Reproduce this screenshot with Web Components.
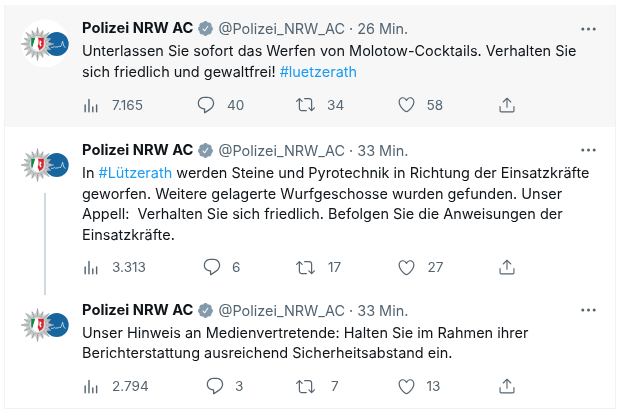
<!DOCTYPE html>
<html lang="de">
<head>
<meta charset="utf-8">
<title>Polizei NRW AC</title>
<style>
  html, body { margin: 0; background: #fff; }
  body { font-family: Inter, "Liberation Sans", sans-serif; color: #0f1419; }
</style>
</head>
<body>
<tweet-thread>
  <tweet-item active pad="13" av="1" gap="12.7" bottom="12.6" cols="114px 100px 100.5px 101px 1fr" ics="30,31,31,30,18" stats="7.165,40,34,58" time="26 Min.">
    Unterlassen Sie sofort das Werfen von Molotow-Cocktails. Verhalten Sie<br>sich friedlich und gewaltfrei! <a-link>#luetzerath</a-link>
  </tweet-item>
  <tweet-item thread pad="12.5" av="0" gap="12" bottom="12" cols="120px 94px 100.5px 101px 1fr" ics="30,30,32,31,18" stats="3.313,6,17,27" time="33 Min.">
    In <a-link>#Lützerath</a-link> werden Steine und Pyrotechnik in Richtung der Einsatzkräfte<br>geworfen. Weitere gelagerte Wurfgeschosse wurden gefunden. Unser<br>Appell:&nbsp; Verhalten Sie sich friedlich. Befolgen Sie die Anweisungen der<br>Einsatzkräfte.
  </tweet-item>
  <tweet-item pad="10.5" av="0" gap="12" bottom="12" cols="123px 91px 100.5px 101px 1fr" ics="30,30,35,30,18" stats="2.794,3,7,13" time="33 Min.">
    Unser Hinweis an Medienvertretende: Halten Sie im Rahmen ihrer<br>Berichterstattung ausreichend Sicherheitsabstand ein.
  </tweet-item>
</tweet-thread>
<script>
const ICONS = {
  views: '<path d="M4.2 21v-9M9.3 21V4.5M14.4 21v-6.5M19.5 21v-9" fill="none" stroke="currentColor" stroke-width="1.9" stroke-linecap="round"/>',
  reply: '<path d="M14.046 2.242l-4.148-.01h-.002c-4.374 0-7.8 3.427-7.8 7.802 0 4.098 3.186 7.206 7.465 7.37v3.828c0 .108.044.286.12.403.142.225.384.347.632.347.138 0 .277-.038.402-.118.264-.168 6.473-4.14 8.088-5.506 1.902-1.61 3.04-3.97 3.043-6.312v-.017c-.006-4.367-3.43-7.787-7.8-7.788zm3.787 12.972c-1.134.96-4.862 3.405-6.772 4.643V16.67c0-.414-.335-.75-.75-.75h-.396c-3.66 0-6.318-2.476-6.318-5.886 0-3.534 2.768-6.302 6.3-6.302l4.147.01h.002c3.532 0 6.3 2.766 6.302 6.296-.003 1.91-.942 3.844-2.514 5.176z"/>',
  retweet: '<path d="M23.77 15.67c-.292-.293-.767-.293-1.06 0l-2.22 2.22V7.65c0-2.068-1.683-3.75-3.75-3.75h-5.85c-.414 0-.75.336-.75.75s.336.75.75.75h5.85c1.24 0 2.25 1.01 2.25 2.25v10.24l-2.22-2.22c-.293-.293-.768-.293-1.06 0s-.294.768 0 1.06l3.5 3.5c.145.147.337.22.53.22s.383-.072.53-.22l3.5-3.5c.294-.292.294-.767 0-1.06zm-10.66 3.28H7.26c-1.24 0-2.25-1.01-2.25-2.25V6.46l2.22 2.22c.148.147.34.22.532.22s.384-.073.53-.22c.293-.293.293-.768 0-1.06l-3.5-3.5c-.293-.294-.768-.294-1.06 0l-3.5 3.5c-.294.292-.294.767 0 1.06s.767.293 1.06 0l2.22-2.22V16.7c0 2.068 1.683 3.75 3.75 3.75h5.85c.414 0 .75-.336.75-.75s-.337-.75-.75-.75z"/>',
  like: '<path d="M12 21.638h-.014C9.403 21.59 1.95 14.856 1.95 8.478c0-3.064 2.525-5.754 5.403-5.754 2.29 0 3.83 1.58 4.646 2.73.814-1.148 2.354-2.73 4.645-2.73 2.88 0 5.404 2.69 5.404 5.755 0 6.376-7.454 13.11-10.037 13.157H12zM7.354 4.225c-2.08 0-3.903 1.988-3.903 4.255 0 5.74 7.034 11.596 8.55 11.658 1.518-.062 8.55-5.917 8.55-11.658 0-2.267-1.823-4.255-3.903-4.255-2.528 0-3.94 2.936-3.952 2.965-.23.562-1.156.562-1.387 0-.014-.03-1.425-2.965-3.954-2.965z"/>',
  share: '<path d="M17.53 7.47l-5-5c-.293-.293-.768-.293-1.06 0l-5 5c-.294.293-.294.768 0 1.06s.767.294 1.06 0l3.72-3.72V15c0 .414.336.75.75.75s.75-.336.75-.75V4.81l3.72 3.72c.146.147.338.22.53.22s.384-.072.53-.22c.293-.293.293-.767 0-1.06z"/><path d="M19.708 21.944H4.292C3.028 21.944 2 20.916 2 19.652V14c0-.414.336-.75.75-.75s.75.336.75.75v5.652c0 .437.355.792.792.792h15.416c.437 0 .792-.355.792-.792V14c0-.414.336-.75.75-.75s.75.336.75.75v5.652c0 1.264-1.028 2.292-2.292 2.292z"/>'
};

class ALink extends HTMLElement {
  constructor() {
    super();
    this.attachShadow({ mode: 'open' }).innerHTML =
      '<style>:host{display:inline;color:#1d9bf0}</style><slot></slot>';
  }
}
customElements.define('a-link', ALink);

class TweetThread extends HTMLElement {
  constructor() {
    super();
    this.attachShadow({ mode: 'open' }).innerHTML = `<style>
      :host{display:block;box-sizing:border-box;width:612px;margin:5px 0 0 4px;filter:blur(.3px);
        border-left:1px solid #eff3f4;border-right:1px solid #eff3f4;border-bottom:1px solid #eff3f4}
    </style><slot></slot>`;
  }
}
customElements.define('tweet-thread', TweetThread);

class PoliceAvatar extends HTMLElement {
  constructor() {
    super();
    const cx = 16.5, cy = 25;
    const pts = [], rays = [];
    for (let i = 0; i < 32; i++) {
      const r = i % 2 ? 10.5 : (i % 4 === 0 ? 16.5 : 14.5);
      const a = i / 32 * Math.PI * 2 - Math.PI / 2;
      const x = (cx + r * Math.cos(a)).toFixed(2), y = (cy + r * Math.sin(a)).toFixed(2);
      pts.push(x + ',' + y);
      if (i % 2 === 0) rays.push(`M${cx} ${cy}L${x} ${y}`);
    }
    this.attachShadow({ mode: 'open' }).innerHTML = `<style>
      :host{display:block;width:48px;height:48px;flex:none}
      svg{display:block}
    </style>
    <svg width="48" height="48" viewBox="0 0 48 48" aria-hidden="true">
      <circle cx="24" cy="24.5" r="24" fill="#fff"/>
      <circle cx="35.7" cy="25" r="12" fill="#17659f"/>
      <path d="M30 28.2l2 .2 1.5-1 1.3 1 1.2-.8 1 .7 1.3-1.4 1 1 1.2-2 1.1-3.6 1.3 5.1 1.7 1" fill="none" stroke="#d5e6f2" stroke-width=".8"/>
      <polygon points="${pts.join(' ')}" fill="#c9cccd" stroke="#a5a9ab" stroke-width=".3"/>
      <path d="${rays.join('')}" stroke="#8f9497" stroke-width=".7" fill="none"/>
      <circle cx="${cx}" cy="${cy}" r="8.6" fill="#d9dbdc" stroke="#9ca1a3" stroke-width=".6"/>
      <path d="M10.2 18.8h12.6v6.4c0 3.3-2.9 5.4-6.3 6.8-3.4-1.4-6.3-3.5-6.3-6.8z" fill="#fff"/>
      <path d="M10.2 18.8h4.2L11.2 29c-.6-1-1-2.3-1-3.8z" fill="#128c45"/>
      <path d="M14.4 18.8h1.8L13 30c-.7-.4-1.3-.8-1.8-1z" fill="#fff"/>
      <path d="M17 18.8h5.8v6.4c0 2.7-1.9 4.6-4.4 6L16.6 27c1.4-2 1.2-5.4.4-8.2z" fill="#d8242f"/>
      <path d="M18.8 21l2 2-1.2 1.5 1.1 2.2-1.5.8-.9-2.6z" fill="#fff"/>
    </svg>`;
  }
}
customElements.define('police-avatar', PoliceAvatar);

class TweetAction extends HTMLElement {
  constructor() {
    super();
    this.attachShadow({ mode: 'open' });
  }
  connectedCallback() {
    const s = this.getAttribute('size') || 20;
    this.shadowRoot.innerHTML = `<style>
      :host{display:flex;align-items:center;height:20px;color:#536471}
      .ic{width:var(--ic,auto);flex:none;display:flex;align-items:center}
      svg{display:block;fill:currentColor}
      span{font-size:13.6px;line-height:20px}
    </style><div class="ic"><svg width="${s}" height="${s}" viewBox="0 0 24 24" aria-hidden="true">${ICONS[this.getAttribute('icon')]}</svg></div><span><slot></slot></span>`;
  }
}
customElements.define('tweet-action', TweetAction);

class TweetItem extends HTMLElement {
  constructor() {
    super();
    this.attachShadow({ mode: 'open' });
  }
  connectedCallback() {
    const g = n => this.getAttribute(n);
    const stats = g('stats').split(',');
    const ics = g('ics').split(',');
    const thread = this.hasAttribute('thread');
    const icons = [['views', 18], ['reply', 20], ['retweet', 19], ['like', 19], ['share', 18]];
    const actions = icons.map(([name, size], i) =>
      `<tweet-action icon="${name}" size="${size}" style="--ic:${ics[i]}px">${stats[i] || ''}</tweet-action>`).join('');
    this.shadowRoot.innerHTML = `<style>
      :host{display:flex;box-sizing:border-box;padding:${g('pad')}px 16px ${g('bottom')}px 16px;gap:13px;background:#fff}
      :host([active]){background:#f7f7f7}
      .side{width:48px;flex:none;display:flex;flex-direction:column;align-items:center;padding-top:${g('av')}px}
      .line{flex:1;width:2px;background:#cfd9de;margin:5px 0 -18px}
      .main{flex:1;min-width:0}
      .head{display:flex;align-items:center;height:21px;line-height:21px;white-space:nowrap}
      .name{font-size:14.7px;font-weight:700;color:#0f1419}
      .badge{display:block;margin:0 4px 0 4px;fill:#829aab}
      .meta{font-size:14.45px;color:#536471}
      .more{margin-left:auto;margin-right:3px;display:block;fill:#536471}
      .text{font-size:14.47px;line-height:20.6px;margin-top:2px;color:#0f1419;white-space:nowrap}
      .actions{display:grid;grid-template-columns:${g('cols')};margin-top:${g('gap')}px;height:20px}
    </style>
    <div class="side"><police-avatar></police-avatar>${thread ? '<div class="line"></div>' : ''}</div>
    <div class="main">
      <div class="head">
        <span class="name">Polizei NRW AC</span>
        <svg class="badge" width="17" height="17" viewBox="0 0 24 24" aria-hidden="true"><path d="M22.5 12.5c0-1.58-.875-2.95-2.148-3.6.154-.435.238-.905.238-1.4 0-2.21-1.71-3.998-3.818-3.998-.47 0-.92.084-1.336.25C14.818 2.415 13.51 1.5 12 1.5s-2.816.917-3.437 2.25c-.415-.165-.866-.25-1.336-.25-2.11 0-3.818 1.79-3.818 4 0 .494.083.964.237 1.4-1.272.65-2.147 2.018-2.147 3.6 0 1.495.782 2.798 1.942 3.486-.02.17-.032.34-.032.514 0 2.21 1.708 4 3.818 4 .47 0 .92-.086 1.335-.25.62 1.334 1.926 2.25 3.437 2.25 1.512 0 2.818-.916 3.437-2.25.415.163.865.248 1.336.248 2.11 0 3.818-1.79 3.818-4 0-.174-.012-.344-.033-.513 1.158-.687 1.943-1.99 1.943-3.484zm-6.616-3.334l-4.334 6.5c-.145.217-.382.334-.625.334-.143 0-.288-.04-.416-.126l-.115-.094-2.415-2.415c-.293-.293-.293-.768 0-1.06s.768-.294 1.06 0l1.77 1.767 3.825-5.74c.23-.345.696-.436 1.04-.207.346.23.44.696.21 1.04z"/></svg>
        <span class="meta">@Polizei_NRW_AC · ${g('time')}</span>
        <svg class="more" width="15" height="4" viewBox="0 0 15 4" aria-hidden="true"><circle cx="1.8" cy="2" r="1.5"/><circle cx="7.5" cy="2" r="1.5"/><circle cx="13.2" cy="2" r="1.5"/></svg>
      </div>
      <div class="text"><slot></slot></div>
      <div class="actions">${actions}</div>
    </div>`;
  }
}
customElements.define('tweet-item', TweetItem);
</script>
</body>
</html>
